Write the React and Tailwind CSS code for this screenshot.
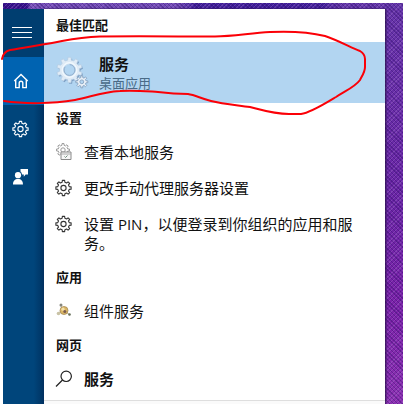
import React from 'react';

// outline of a cog wheel, centred on cx, cy
function gearPath(cx, cy, inner, outer, teeth = 8) {
  const step = (Math.PI * 2) / teeth;
  const at = (r, a) => `${(cx + r * Math.cos(a)).toFixed(2)} ${(cy + r * Math.sin(a)).toFixed(2)}`;
  const points = [];
  for (let i = 0; i < teeth; i++) {
    const a = i * step - Math.PI / 2;
    points.push(at(inner, a - step * 0.3), at(outer, a - step * 0.19), at(outer, a + step * 0.19), at(inner, a + step * 0.3));
  }
  return `M${points.join('L')}Z`;
}

function GearIcon({ className }) {
  return (
    <svg viewBox="0 0 18 18" className={className} fill="none" stroke="currentColor" strokeWidth="1.1" strokeLinejoin="round">
      <path d={gearPath(8.5, 9, 5.9, 7.7)} />
      <circle cx="8.5" cy="9" r="2.6" />
    </svg>
  );
}

function HomeIcon() {
  return (
    <svg viewBox="0 0 18 18" className="size-[18px]" fill="none" stroke="currentColor" strokeWidth="1.4">
      <path d="M2.3 9 9 2.4 15.7 9M3.7 8v7.6h3.5v-4.5a1.8 1.8 0 0 1 3.6 0v4.5h3.5V8" />
    </svg>
  );
}

function MenuIcon() {
  return (
    <svg viewBox="0 0 20 14" className="h-[14px] w-5" stroke="currentColor" strokeWidth="1">
      <path d="M0 1.5h20M0 6.5h20M0 11.5h20" />
    </svg>
  );
}

function FeedbackIcon() {
  return (
    <svg viewBox="0 0 18 18" className="size-[18px]" fill="currentColor">
      <circle cx="6" cy="7.2" r="3.1" />
      <path d="M1 16.5c0-3.8 1.8-5.6 5-5.6s5 1.8 5 5.6ZM8.5 1H16v5.5h-2.4L11.8 8.7V6.5H10A4.5 4.5 0 0 0 8.5 3.6Z" />
    </svg>
  );
}

function ServicesIcon() {
  return (
    <svg viewBox="0 0 34 34" className="size-[34px] shrink-0" strokeLinejoin="round">
      <path d={gearPath(14.6, 15.2, 10, 12.6, 10)} fill="#7d9fc4" />
      <path d={gearPath(13.5, 14, 10, 12.8, 10)} fill="#dfebf6" stroke="#b3cbe2" strokeWidth="0.7" />
      <circle cx="13.5" cy="14" r="7.2" fill="#c8dcef" stroke="#f1f8fd" strokeWidth="1.4" />
      <circle cx="13.5" cy="14" r="5.4" fill="#b2d5f1" stroke="#8ba9c8" strokeWidth="0.9" strokeDasharray="20 5" />
      <path d={gearPath(25.8, 25.8, 4.3, 6.1)} fill="#e9f0f7" stroke="#7f9bba" strokeWidth="0.8" />
      <circle cx="25.8" cy="25.8" r="1.9" fill="#b2d5f1" stroke="#7f9bba" strokeWidth="0.8" />
    </svg>
  );
}

function LocalServicesIcon() {
  return (
    <svg viewBox="0 0 18 18" className="size-[18px]" fill="none" stroke="#999">
      <path d={gearPath(8, 7, 4.8, 6.5)} />
      <circle cx="8" cy="7" r="2.2" />
      <path d="M6 9h10v7.5H6Z" fill="#f6f6f6" stroke="#8a8a8a" />
      <path d="M6 11h10" stroke="#aaa" />
      <path d="m9.5 13.5 1 1 2-2" stroke="#6e8b7a" />
    </svg>
  );
}

function ComponentIcon() {
  return (
    <svg viewBox="0 0 18 18" className="size-[18px]">
      <path d="M5 3l3 4M11 10l4 3M3 11l4-2" stroke="#b5aa95" />
      <circle cx="9" cy="8.5" r="4" fill="#dcb765" stroke="#a58a57" strokeWidth="0.8" />
      <circle cx="8" cy="7.2" r="1.6" fill="#f4e1aa" />
      <circle cx="9.8" cy="9.6" r="1.5" fill="#7a5c50" />
      <circle cx="6" cy="3" r="1.5" fill="#85867c" />
      <circle cx="3.5" cy="11.5" r="1.8" fill="#c9c3a6" />
      <circle cx="14.5" cy="12.5" r="1.3" fill="#66705a" />
    </svg>
  );
}

function SearchIcon() {
  return (
    <svg viewBox="0 0 18 18" className="size-[18px]" fill="none" stroke="#222" strokeWidth="1.2">
      <circle cx="11.2" cy="6.3" r="5.2" />
      <path d="M7.5 10 1 16.5" />
    </svg>
  );
}

const NAV = [
  { label: '菜单', icon: <MenuIcon />, color: 'bg-[#003e70]' },
  { label: '主页', icon: <HomeIcon />, color: 'bg-[#0063b1]' },
  { label: '设置', icon: <GearIcon className="size-[18px]" />, color: '' },
  { label: '反馈', icon: <FeedbackIcon />, color: '' },
];

const SECTIONS = [
  {
    title: '设置',
    items: [
      { text: '查看本地服务', icon: <LocalServicesIcon /> },
      { text: '更改手动代理服务器设置', icon: <GearIcon className="size-[18px]" /> },
      { text: '设置 PIN，以便登录到你组织的应用和服务。', icon: <GearIcon className="size-[18px]" /> },
    ],
  },
  { title: '应用', items: [{ text: '组件服务', icon: <ComponentIcon /> }] },
  { title: '网页', items: [{ text: '服务', icon: <SearchIcon />, bold: true }] },
];

function Heading({ children }) {
  return <h2 className="flex h-8 items-center pl-3 text-[13px] font-bold">{children}</h2>;
}

function ResultRow({ item }) {
  return (
    <button type="button" className="flex w-full gap-[11px] pt-2 pr-7 pb-[9px] pl-[11px] text-left text-[15px] leading-[19px]">
      <span className="shrink-0 text-[#333]">{item.icon}</span>
      <span className={item.bold ? 'font-bold' : ''}>{item.text}</span>
    </button>
  );
}

export default function App() {
  return (
    <div className="relative min-h-screen overflow-hidden bg-white pt-[3px] pr-[14px] pl-[3px] font-['Open_Sans','Noto_Sans_CJK_SC',sans-serif] text-[#111]">
      <div className="flex min-h-[calc(100vh-3px)] bg-[#6d2ba6] bg-[repeating-linear-gradient(45deg,#20005a50_0px_1px,transparent_1px_3px),repeating-linear-gradient(135deg,#c291e440_0px_1px,transparent_1px_3px),linear-gradient(180deg,transparent_6px,#6534a8_6px,#6a25a5_50%,#7a22a8_75%,#8a2fb0),linear-gradient(90deg,#35128a_6%,#7550b8_7%,#6f4ab4_44%,#40209a_48%,#42209a_80%,#6236a8_84%)] pt-1.5 pr-[18px]">
        <nav className="w-[41px] shrink-0 bg-[#004275] bg-linear-to-r from-[#00457b] from-75% to-[#003261] text-white">
          {NAV.map((item) => (
            <button key={item.label} type="button" aria-label={item.label} className={`flex h-12 w-full items-center pl-[9px] ${item.color}`}>
              {item.icon}
            </button>
          ))}
        </nav>

        <main className="flex min-w-0 flex-1 flex-col bg-white shadow-[1px_0_2px_#28104b]">
          <div className="pt-px">
            <Heading>最佳匹配</Heading>
          </div>
          <button type="button" className="flex h-[61px] w-full items-center gap-[9px] bg-[#b2d5f1] pl-3 text-left">
            <ServicesIcon />
            <span className="flex flex-col">
              <span className="text-[15px] leading-5 font-bold">服务</span>
              <span className="text-[13px] leading-[18px] text-[#496a87]">桌面应用</span>
            </span>
          </button>
          {SECTIONS.map((section) => (
            <section key={section.title}>
              <Heading>{section.title}</Heading>
              {section.items.map((item) => (
                <ResultRow key={item.text} item={item} />
              ))}
            </section>
          ))}
          <div className="mt-0.5 flex-1 border-t border-[#dedede] bg-[#fafafa]" />
        </main>
      </div>

      {/* hand-drawn marker loop round the best match */}
      <svg viewBox="0 0 400 130" className="pointer-events-none absolute top-0 left-0 h-[130px] w-[400px]" fill="none" stroke="#fb0007" strokeWidth="2" strokeLinecap="round" strokeLinejoin="round">
        <path d="M2 59C3 54 5 51 10 50C26 47 48 44 62 41C78 38 87 37 100 36.5C135 36 180 36.5 215 36.5C234 36 251 33 270 32C292 31 309 32 325 36C337 40 350 47 360 51Q365 54 365 59V67C365 72 362 76 360 80C355 87 345 91 336 97C326 103 310 113 301 114H289C273 114 262 110 250 107C236 105 223 104 211 101C200 98 195 95 188 94C178 94 166 93 158 92C143 91 133 90 120 91C101 92 91 97 75 100C52 104 24 104 4 101" />
      </svg>
    </div>
  );
}
